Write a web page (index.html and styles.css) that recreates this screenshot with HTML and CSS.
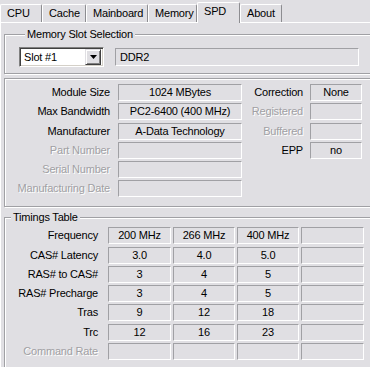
FILE: index.html
```html
<!DOCTYPE html>
<html lang="en">
<head>
    <meta charset="UTF-8">
    <title>CPU-Z SPD</title>
    <link rel="stylesheet" href="styles.css">
</head>
<body>
<div class="tabs">
    <div class="tab t-cpu">CPU</div>
    <div class="tab t-cache">Cache</div>
    <div class="tab t-board">Mainboard</div>
    <div class="tab t-mem">Memory</div>
    <div class="tab t-spd active">SPD</div>
    <div class="tab t-about">About</div>
</div>

<div class="page">
    <fieldset class="group slot">
        <legend>Memory Slot Selection</legend>
        <div class="slot-row">
            <div class="combo">
                <span class="combo-text">Slot #1</span>
                <span class="combo-btn">
                    <svg width="7" height="4" viewBox="0 0 7 4"><path d="M0 0h7L3.5 4z" fill="#000"/></svg>
                </span>
            </div>
            <div class="field left ddr">DDR2</div>
        </div>
    </fieldset>

    <fieldset class="group info">
        <div class="grid info-grid">
            <div class="lbl">Module Size</div>
            <div class="field">1024 MBytes</div>
            <div class="lbl lbl-r">Correction</div>
            <div class="field">None</div>

            <div class="lbl">Max Bandwidth</div>
            <div class="field">PC2-6400 (400 MHz)</div>
            <div class="lbl lbl-r off">Registered</div>
            <div class="field"></div>

            <div class="lbl">Manufacturer</div>
            <div class="field">A-Data Technology</div>
            <div class="lbl lbl-r off">Buffered</div>
            <div class="field"></div>

            <div class="lbl off">Part Number</div>
            <div class="field"></div>
            <div class="lbl lbl-r">EPP</div>
            <div class="field">no</div>

            <div class="lbl off">Serial Number</div>
            <div class="field"></div>
            <div></div><div></div>

            <div class="lbl off">Manufacturing Date</div>
            <div class="field"></div>
            <div></div><div></div>
        </div>
    </fieldset>

    <fieldset class="group timings">
        <legend>Timings Table</legend>
        <div class="grid time-grid">
            <div class="lbl">Frequency</div>
            <div class="field">200 MHz</div><div class="field">266 MHz</div><div class="field">400 MHz</div><div class="field"></div>

            <div class="lbl">CAS# Latency</div>
            <div class="field">3.0</div><div class="field">4.0</div><div class="field">5.0</div><div class="field"></div>

            <div class="lbl">RAS# to CAS#</div>
            <div class="field">3</div><div class="field">4</div><div class="field">5</div><div class="field"></div>

            <div class="lbl">RAS# Precharge</div>
            <div class="field">3</div><div class="field">4</div><div class="field">5</div><div class="field"></div>

            <div class="lbl">Tras</div>
            <div class="field">9</div><div class="field">12</div><div class="field">18</div><div class="field"></div>

            <div class="lbl">Trc</div>
            <div class="field">12</div><div class="field">16</div><div class="field">23</div><div class="field"></div>

            <div class="lbl off">Command Rate</div>
            <div class="field"></div><div class="field"></div><div class="field"></div><div class="field"></div>
        </div>
    </fieldset>
</div>
</body>
</html>
```

FILE: styles.css
```css
html, body { margin: 0; padding: 0; overflow: hidden; }
body { background: #e0dfe3; color: #000; font-family: "Liberation Sans", Arial, sans-serif; font-size: 11px; letter-spacing: -0.2px; width: 370px; height: 367px; }

/* tab strip */
.tabs { display: flex; align-items: flex-end; height: 22px; }
.tab { box-sizing: border-box; height: 18px; line-height: 17px; padding-left: 6px; border-top: 1px solid #fff; border-left: 1px solid #fff; border-right: 1px solid #8d8d91; border-radius: 2px 2px 0 0; white-space: nowrap; }
.tab.active { height: 21px; line-height: 17px; margin-bottom: -1px; position: relative; z-index: 1; background: #e0dfe3; }
.t-cpu { width: 42px; }
.t-cache { width: 44px; }
.t-board { width: 62px; }
.t-mem { width: 49px; }
.t-spd { width: 43px; }
.t-about { width: 42px; }

/* page */
.page { box-sizing: border-box; width: 380px; height: 345px; border-top: 1px solid #fff; border-left: 1px solid #fff; padding-left: 3px; }

.group { margin: 0; padding: 0; min-width: 0; border: 1px solid #a0a0a4; box-shadow: inset 1px 1px 0 #fff, 1px 1px 0 #fff; }
.group legend { margin-left: 6px; padding: 0 2px; line-height: 13px; background: #e0dfe3; }

.slot { margin-top: 5px; padding: 6px 0 6px 14px; }
.slot-row { display: flex; align-items: center; gap: 11px; }
.combo { box-sizing: border-box; width: 85px; height: 20px; display: flex; align-items: center; justify-content: space-between; padding: 2px; background: #fff; border: 1px solid; border-color: #808080 #fff #fff #808080; box-shadow: inset 1px 1px 0 #404040, inset -1px -1px 0 #d4d0c8; }
.combo-text { padding-left: 2px; }
.combo-btn { box-sizing: border-box; width: 16px; height: 16px; display: flex; align-items: center; justify-content: center; background: #e0dfe3; border: 1px solid; border-color: #e0dfe3 #404040 #404040 #e0dfe3; box-shadow: inset 1px 1px 0 #fff, inset -1px -1px 0 #808080; }

.field { box-sizing: border-box; height: 17px; line-height: 15px; text-align: center; border: 1px solid; border-color: #a0a0a4 #fff #fff #a0a0a4; white-space: nowrap; overflow: hidden; }
.field.left { text-align: left; padding-left: 4px; }
.ddr { width: 244px; height: 18px; line-height: 16px; }

.grid { display: grid; grid-auto-rows: 17px; row-gap: 2.25px; }
.lbl { text-align: right; padding-right: 8px; line-height: 17px; white-space: nowrap; }
.lbl-r { padding-right: 7px; }
.off { color: #a0a0a4; text-shadow: 1px 1px 0 #fff; }

.info { margin-top: 4px; padding: 5px 0 9px 0; }
.info-grid { grid-template-columns: 113px 124px 68px 52px; }

.timings { margin-top: 4px; padding: 3px 0 0 0; height: 160px; }
.time-grid { grid-template-columns: 101px 63px 62px 62px 63px; column-gap: 2px; }
```
